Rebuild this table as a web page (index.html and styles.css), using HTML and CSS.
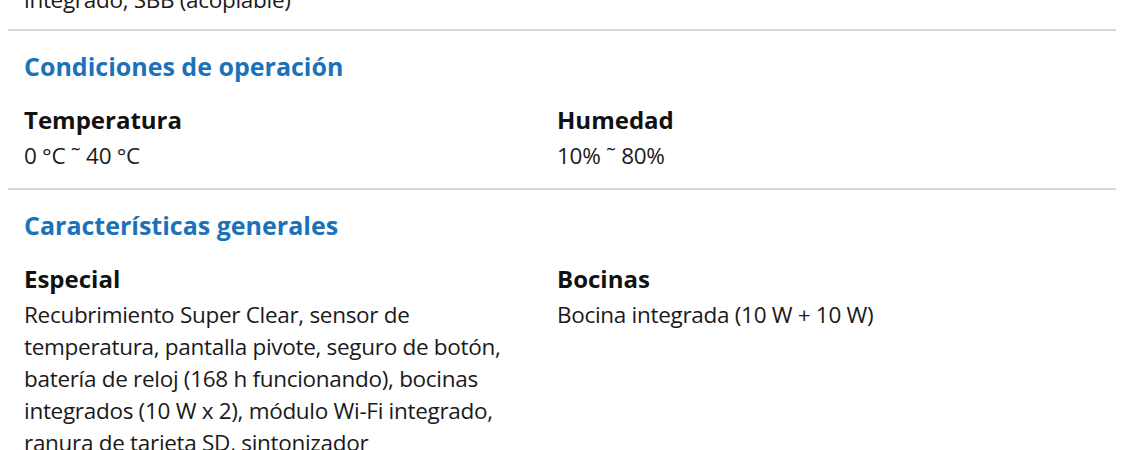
FILE: index.html
```html
<!DOCTYPE html>
<html lang="es">
<head>
<meta charset="utf-8">
<link rel="stylesheet" href="styles.css">
</head>
<body>
<div class="specs">
  <section class="group group-cut">
    <div class="grid">
      <div class="item">
        <p class="value">integrado, SBB (acoplable)</p>
      </div>
    </div>
  </section>
  <section class="group">
    <h2 class="title">Condiciones de operación</h2>
    <div class="grid">
      <div class="item">
        <h3 class="label">Temperatura</h3>
        <p class="value">0 °C ˜ 40 °C</p>
      </div>
      <div class="item">
        <h3 class="label">Humedad</h3>
        <p class="value">10% ˜ 80%</p>
      </div>
    </div>
  </section>
  <section class="group">
    <h2 class="title">Características generales</h2>
    <div class="grid">
      <div class="item">
        <h3 class="label">Especial</h3>
        <p class="value">Recubrimiento Super Clear, sensor de temperatura, pantalla pivote, seguro de botón, batería de reloj (168 h funcionando), bocinas integrados (10 W x 2), módulo Wi-Fi integrado, ranura de tarjeta SD, sintonizador</p>
      </div>
      <div class="item">
        <h3 class="label">Bocinas</h3>
        <p class="value">Bocina integrada (10 W + 10 W)</p>
      </div>
    </div>
  </section>
</div>
</body>
</html>
```

FILE: styles.css
```css
html, body {
  margin: 0;
  padding: 0;
  background: #fff;
  overflow: hidden;
}
body {
  font-family: "Open Sans", "Noto Sans", sans-serif;
  color: #111;
}
.specs {
  margin: -16px 24px 0 8px;
}
.group {
  border-bottom: 2px solid #d8d8d8;
  padding: 0 16px 16px;
}
.group-cut {
  padding-bottom: 13px;
}
.title {
  margin: 0;
  padding-top: 19px;
  font-size: 25px;
  line-height: 32px;
  font-weight: 700;
  color: #1c72b8;
}
.grid {
  display: grid;
  grid-template-columns: 533px 1fr;
}
.title + .grid {
  margin-top: 23px;
}
.label {
  margin: 0;
  font-size: 24px;
  line-height: 30px;
  font-weight: 700;
  color: #111;
}
.value {
  margin: 5px 0 0;
  font-size: 22.5px;
  letter-spacing: -0.3px;
  line-height: 32px;
  font-weight: 400;
  color: #1a1a1a;
  max-width: 500px;
}
.group-cut .value {
  margin: 0;
}
```
